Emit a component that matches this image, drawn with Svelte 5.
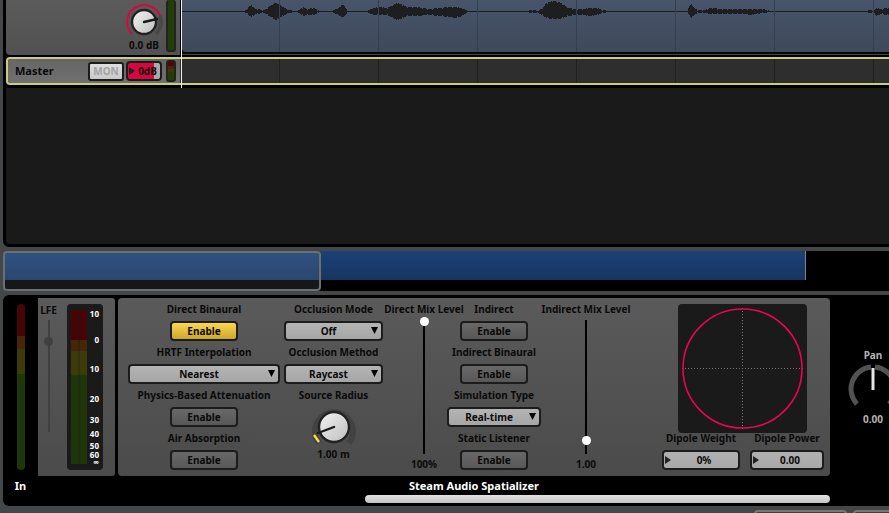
<script>
  const scale = [
    ['10', 10], ['0', 36], ['10', 65], ['20', 95], ['30', 116],
    ['40', 130], ['50', 142], ['60', 151], ['∞', 158]
  ];
  const gridLines = Array.from({ length: 14 }, (_, i) => 97 + i * 99);

  // Envelope of the clip: [x, height above the axis, height below the axis]
  const envelope = [
    [0, 0, 0], [61, 0, 0], [64, 1, 1], [66, 4, 3], [69, 6, 5], [73, 2, 2], [82, 1, 1],
    [85, 3, 3], [90, 7, 6], [93, 8, 8], [97, 7, 6], [102, 3, 3], [106, 1, 1], [114, 0, 0],
    [117, 1, 1], [121, 4, 4], [124, 2, 3], [131, 3, 3], [137, 0, 0], [150, 0, 0],
    [154, 2, 2], [158, 4, 4], [160, 7, 6], [164, 2, 2], [166, 0, 0], [184, 0, 0],
    [191, 3, 3], [197, 4, 3], [205, 3, 3], [210, 6, 6], [215, 8, 8], [218, 7, 7],
    [225, 4, 4], [235, 4, 4], [246, 2, 3], [257, 3, 4], [267, 4, 5], [273, 4, 6],
    [280, 3, 4], [285, 0, 0], [344, 0, 0], [350, 1, 1], [356, 0, 1], [361, 4, 4],
    [364, 8, 6], [370, 10, 7], [376, 9, 7], [380, 7, 6], [386, 3, 4], [393, 2, 3],
    [400, 2, 3], [407, 3, 4], [415, 3, 3], [420, 1, 1], [426, 0, 0], [505, 0, 0],
    [507, 5, 3], [509, 7, 6], [512, 3, 3], [515, 1, 1], [522, 1, 1], [528, 3, 2],
    [540, 2, 2], [562, 2, 2], [568, 2, 3], [580, 2, 1], [589, 0, 0], [684, 0, 0],
    [687, 1, 1], [691, 0, 0], [694, 3, 4], [698, 2, 2], [706, 3, 3], [720, 6, 5],
    [750, 2, 2], [760, 0, 0], [1400, 0, 0]
  ];

  function wavePath() {
    const top = [];
    const bottom = [];
    for (let i = 0; i < envelope.length - 1; i++) {
      const [x0, u0, d0] = envelope[i];
      const [x1, u1, d1] = envelope[i + 1];
      for (let x = x0; x < x1; x++) {
        const t = (x - x0) / (x1 - x0);
        const u = u0 + (u1 - u0) * t;
        const d = d0 + (d1 - d0) * t;
        const dip = (x * 7) % 5 === 0 ? 1 : 0;
        const a = 11 - Math.max(0, Math.round(u) - dip);
        const b = 12 + Math.max(0, Math.round(d) - dip);
        top.push(`L${x} ${a}H${x + 1}`);
        bottom.unshift(`L${x + 1} ${b}H${x}`);
      }
    }
    return 'M0 11' + top.join('') + bottom.join('') + 'Z';
  }
  const wave = wavePath();

  let directMix = $state(100);
  let indirectMix = $state(9);
  let lfe = $state(82);
</script>

{#snippet caret()}
  <svg class="caret" width="7" height="7" viewBox="0 0 7 7" aria-hidden="true"><path d="M0 0h7L3.5 7z" /></svg>
{/snippet}

{#snippet toggle(id, label, on)}
  <div class="field">
    <span class="label" id={id}>{label}</span>
    <button class="toggle" class:on aria-pressed={on} aria-labelledby={id}>Enable</button>
  </div>
{/snippet}

{#snippet choice(id, label, value, size)}
  <div class="field">
    <label class="label" for={id}>{label}</label>
    <div class="select {size}">
      <select {id}><option>{value}</option></select>
      {@render caret()}
    </div>
  </div>
{/snippet}

{#snippet number(id, label, value, size)}
  <div class="field">
    <label class="label" for={id}>{label}</label>
    <div class="number {size}">
      <svg width="6" height="8" viewBox="0 0 6 8" aria-hidden="true"><path d="M0 0l6 4-6 4z" /></svg>
      <input {id} type="text" {value} />
    </div>
  </div>
{/snippet}

<div class="app">
  <section class="tracks">
    <div class="track">
      <div class="head">
        <div class="volume">
          <svg width="40" height="38" viewBox="0 0 40 38" role="img" aria-label="Volume">
            <defs>
              <linearGradient id="cap" x1="0" y1="0" x2="1" y2="1">
                <stop offset="0" stop-color="#f4f4f4" /><stop offset="1" stop-color="#bdbdbd" />
              </linearGradient>
            </defs>
            <path d="M36 16A17 17 0 0 1 32 34" fill="none" stroke="#484848" stroke-width="4" />
            <path d="M8 34A17 17 0 1 1 36 16" fill="none" stroke="#d60743" stroke-width="2" />
            <circle cx="20" cy="22" r="12" fill="url(#cap)" stroke="#222" stroke-width="2.400" />
            <path d="M20 22l13-3" stroke="#1a1a1a" stroke-width="2.400" stroke-linecap="round" />
          </svg>
          <span>0.0 dB</span>
        </div>
        <div class="slot tall"></div>
      </div>
      <div class="lane">
        <svg class="clip" height="52" aria-hidden="true">
          <path d={wave} fill="#1d1e20" shape-rendering="crispEdges" />
          {#each gridLines as x}<rect {x} y="0" width="1" height="52" fill="#344052" />{/each}
        </svg>
      </div>
    </div>
    <div class="master">
      <div class="masterhead">
        <span class="name">Master</span>
        <button class="mon">MON</button>
        <div class="gain">
          <svg width="6" height="8" viewBox="0 0 6 8" aria-hidden="true"><path d="M0 0l6 4-6 4z" /></svg>
          <input type="text" value="0dB" aria-label="Master volume" />
        </div>
        <div class="slot short"></div>
      </div>
      <svg class="bus" height="24" aria-hidden="true">
        {#each gridLines as x}<rect {x} y="0" width="1" height="24" fill="#202020" />{/each}
      </svg>
    </div>
    <div class="empty"></div>
    <div class="playhead"></div>
  </section>

  <section class="overview">
    <div class="span"></div>
    <div class="viewport"></div>
  </section>

  <section class="deck">
    <div class="chain">
      <div class="unit in">
        <div class="inmeter"></div>
        <span class="title">In</span>
      </div>
      <div class="unit lfe">
        <div class="panel">
          <div class="lfecol">
            <label for="lfe">LFE</label>
            <input class="fader dim" id="lfe" type="range" min="0" max="100" bind:value={lfe} />
          </div>
          <svg class="meter" width="36" height="166" viewBox="0 0 36 166" role="img" aria-label="Level">
            <rect width="36" height="166" rx="4" fill="#1a1a1a" />
            <rect x="4" y="6" width="16" height="30" fill="#450507" />
            <rect x="4" y="36" width="16" height="11" fill="#46250a" />
            <rect x="4" y="47" width="16" height="24" fill="#3e3b0a" />
            <rect x="4" y="71" width="16" height="89" fill="#1e3609" />
            <path d="M12 6v154" stroke="#1a1a1a" stroke-opacity=".5" />
            {#each scale as [t, y]}<text x="32" y={y + 3} text-anchor="end">{t}</text>{/each}
          </svg>
        </div>
      </div>
      <div class="unit spatializer">
        <div class="panel">
          <div class="col c1">
            {@render toggle('db', 'Direct Binaural', true)}
            {@render choice('hrtf', 'HRTF Interpolation', 'Nearest', 'wide')}
            {@render toggle('pba', 'Physics-Based Attenuation', false)}
            {@render toggle('air', 'Air Absorption', false)}
          </div>
          <div class="col c2">
            {@render choice('om', 'Occlusion Mode', 'Off', 'mid')}
            {@render choice('oc', 'Occlusion Method', 'Raycast', 'mid')}
            <span class="label">Source Radius</span>
            <svg width="48" height="40" viewBox="0 0 48 40" role="img" aria-label="Source Radius">
              <path d="M9 36A19 19 0 1 1 39 36" fill="none" stroke="#424242" stroke-width="6" />
              <path d="M4 28l5 7" stroke="#fadb4a" stroke-width="2.400" />
              <circle cx="24" cy="20" r="15" fill="url(#cap)" stroke="#222" stroke-width="2.400" />
              <path d="M24 20l-16 6" stroke="#1a1a1a" stroke-width="2.400" stroke-linecap="round" />
            </svg>
            <span class="value">1.00 m</span>
          </div>
          <div class="col c3">
            <label class="label" for="dmix">Direct Mix Level</label>
            <input class="fader" id="dmix" type="range" min="0" max="100" bind:value={directMix} />
            <span class="value">100%</span>
          </div>
          <div class="col c4">
            {@render toggle('ind', 'Indirect', false)}
            {@render toggle('ib', 'Indirect Binaural', false)}
            {@render choice('sim', 'Simulation Type', 'Real-time', 'small')}
            {@render toggle('sl', 'Static Listener', false)}
          </div>
          <div class="col c5">
            <label class="label" for="imix">Indirect Mix Level</label>
            <input class="fader" id="imix" type="range" min="0" max="100" bind:value={indirectMix} />
            <span class="value">1.00</span>
          </div>
          <div class="col c6">
            <svg class="dipole" width="129" height="129" viewBox="0 0 129 129" role="img" aria-label="Dipole pattern">
              <rect width="129" height="129" rx="4" fill="#1a1a1a" />
              <path d="M64.5 4v122M4 64.5h122" stroke="#777" stroke-dasharray="1 2" />
              <circle cx="64.500" cy="64.500" r="59.500" fill="none" stroke="#ea0550" stroke-width="1.600" />
            </svg>
            <div class="pair">
              {@render number('dw', 'Dipole Weight', '0%', 'large')}
              {@render number('dp', 'Dipole Power', '0.00', '')}
            </div>
          </div>
        </div>
        <span class="title">Steam Audio Spatializer</span>
      </div>
      <div class="unit pan">
        <span class="panlabel">Pan</span>
        <svg width="54" height="48" viewBox="0 0 54 48" role="img" aria-label="Pan">
          <path d="M11 42A22 22 0 0 1 25 5M29 5A22 22 0 0 1 43 42" fill="none" stroke="#525252" stroke-width="5" />
          <path d="M27 6v22" stroke="#e6e6e6" stroke-width="3" />
        </svg>
        <span class="panvalue">0.00</span>
      </div>
    </div>
    <div class="scrollbar"></div>
  </section>

  <footer>
    <div class="tab"></div>
    <div class="tab"></div>
  </footer>
</div>

<style>
  :global(body) { background: #444747; }
  * { box-sizing: border-box; }
  .app {
    height: 100vh;
    overflow: hidden;
    display: flex;
    flex-direction: column;
    background: #444747;
    color: #0a0a0a;
    font: 700 10px/14px "Noto Sans", "Open Sans", sans-serif;
  }
  button, select, input { font: inherit; color: inherit; margin: 0; padding: 0; }
  svg { display: block; flex: none; }

  .tracks {
    position: relative;
    flex: none;
    margin-left: 3px;
    padding: 0 0 3px 3px;
    background: #000;
    border-bottom-left-radius: 6px;
  }
  .track { display: flex; height: 57px; }
  .head {
    flex: none;
    display: flex;
    justify-content: flex-end;
    gap: 2px;
    width: 174px;
    height: 55px;
    padding-right: 4px;
    background: linear-gradient(#5b5b5b, #515151);
    border-bottom-left-radius: 4px;
  }
  .volume { display: flex; flex-direction: column; align-items: center; }
  .slot {
    flex: none;
    width: 10px;
    border: 2px solid #222;
    border-radius: 3px;
  }
  .slot.tall { height: 52px; border-top: 0; background: #223d06; }
  .slot.short { height: 22px; background: linear-gradient(#4d0505 20%, #48280a 20% 36%, #403d0a 48%, #223d06 56%); }
  .lane {
    flex: 1;
    height: 55px;
    margin-left: 2px;
    border-bottom: 1px solid #444;
    background: #080808;
    overflow: hidden;
  }
  .clip { width: 100%; border-bottom-left-radius: 4px; background: linear-gradient(#47546a, #3f495a); }
  .master {
    display: flex;
    height: 28px;
    border: 2px solid #cdcb7e;
    border-right: 0;
    border-radius: 4px 0 0 4px;
    background: #2e2e2e;
    overflow: hidden;
  }
  .masterhead {
    flex: none;
    display: flex;
    align-items: center;
    gap: 2px;
    width: 172px;
    margin-right: 2px;
    padding: 0 4px 0 7px;
    background: linear-gradient(#666, #707070);
  }
  .name { flex: 1; font-size: 11px; }
  .mon {
    width: 36px;
    height: 19px;
    border: 2px solid #1c1c1c;
    border-radius: 3px;
    background: linear-gradient(#dedede, #c9c9c9);
    color: #a3a3a3;
    line-height: 14px;
  }
  .gain {
    display: flex;
    align-items: center;
    width: 36px;
    height: 20px;
    margin-right: 2px;
    padding-left: 1px;
    border: 2px solid #1c1c1c;
    border-radius: 4px;
    background: linear-gradient(90deg, #d60743 26px, #aaa 26px);
    fill: #222;
  }
  .gain input, .number input {
    flex: 1;
    min-width: 0;
    border: 0;
    background: none;
    text-align: center;
    outline: 0;
  }
  .bus { flex: 1; min-width: 0; }
  .empty { height: 159px; border-top: 3px solid #000; border-bottom-left-radius: 4px; background: #1a1a1a; }
  .playhead { position: absolute; left: 178px; top: 0; width: 1px; height: 88px; background: #f0f0f0; }

  .overview {
    position: relative;
    flex: none;
    height: 40px;
    margin: 4px 0 4px 4px;
    background: #000;
    border-radius: 4px 0 0 4px;
  }
  .span { width: 802px; max-width: 100%; height: 29px; border-right: 1px solid #77858f; background: linear-gradient(#1c4178, #163560); }
  .viewport {
    position: absolute;
    left: -1px;
    top: 0;
    width: 318px;
    height: 40px;
    border: 2px solid #6a6f72;
    border-radius: 4px;
    background: rgba(255, 255, 255, 0.09);
  }

  .deck {
    flex: none;
    margin-left: 3px;
    padding: 3px 0;
    background: #000;
    border-radius: 6px 0 0 6px;
    overflow: hidden;
  }
  .chain { display: flex; }
  .unit { flex: none; display: flex; flex-direction: column; align-items: center; height: 197px; }
  .panel { flex: none; display: flex; width: 100%; height: 178px; background: linear-gradient(#5a5a5a, #4b4b4b); }
  .title { flex: none; color: #fff; font-size: 11px; line-height: 20px; }
  .in { width: 35px; }
  .inmeter {
    flex: none;
    width: 8px;
    height: 166px;
    margin: 6px 0;
    border-radius: 4px;
    background: linear-gradient(#450507 32px, #46250a 32px 45px, #3e3b0a 45px 70px, #1e3609 70px);
  }
  .lfe { width: 77px; margin-right: 3px; }
  .lfe .panel { gap: 8px; border-radius: 0 3px 3px 0; }
  .lfecol { display: flex; flex-direction: column; align-items: center; width: 21px; padding-top: 5px; white-space: nowrap; }
  .meter { margin-top: 6px; font: 700 8px "Open Sans", sans-serif; fill: #fff; }

  .spatializer { width: 712px; }
  .spatializer .panel { padding: 0 6px 0 10px; border-radius: 4px; }
  .col { flex: none; display: flex; flex-direction: column; align-items: center; }
  .c1 { width: 152px; margin-right: 4px; }
  .c2 { width: 99px; }
  .c3 { width: 82px; }
  .c4 { width: 58px; }
  .c5 { width: 126px; }
  .c6 { flex: 1; padding: 6px 0 0 13px; }
  .field { display: flex; flex-direction: column; align-items: center; }
  .label { line-height: 23px; white-space: nowrap; }
  .value { line-height: 14px; white-space: nowrap; }
  .toggle {
    width: 68px;
    height: 20px;
    border: 2px solid #1c1c1c;
    border-radius: 4px;
    background: linear-gradient(#686868, #585858);
    line-height: 16px;
  }
  .toggle.on { background: linear-gradient(#fbd650, #cda62c); }
  .select { position: relative; height: 20px; }
  .wide { width: 152px; }
  .mid { width: 99px; }
  .small { width: 94px; }
  select {
    appearance: none;
    display: block;
    width: 100%;
    height: 100%;
    padding-right: 10px;
    border: 2px solid #1c1c1c;
    border-radius: 4px;
    background: linear-gradient(#b4b4b4, #a6a6a6);
    text-align: center;
    text-align-last: center;
  }
  .caret { position: absolute; right: 5px; top: 6px; pointer-events: none; }
  .fader {
    appearance: none;
    writing-mode: vertical-lr;
    direction: rtl;
    width: 10px;
    height: 140px;
    background: linear-gradient(#000, #000) center bottom 3px / 2px 134px no-repeat;
  }
  .fader::-webkit-slider-thumb { appearance: none; width: 9px; height: 9px; border-radius: 50%; background: #fff; }
  .fader.dim { height: 118px; background: linear-gradient(#404040, #404040) center / 2px 112px no-repeat; }
  .fader.dim::-webkit-slider-thumb { background: #404040; }
  .c3 .fader, .c5 .fader { margin-top: -4px; }
  .dipole { align-self: center; margin-right: 2px; }
  .pair { display: flex; gap: 10px; margin-top: -6px; }
  .number {
    display: flex;
    align-items: center;
    width: 74px;
    height: 20px;
    padding: 0 1px;
    border: 2px solid #1c1c1c;
    border-radius: 4px;
    background: linear-gradient(#b0b0b0, #a9a9a9);
    fill: #222;
  }
  .number.large { width: 78px; }

  .pan { width: 86px; padding-top: 50px; color: #b4b4b4; }
  .pan svg { height: 48px; }
  .panvalue { margin-top: 2px; }
  .scrollbar {
    width: 465px;
    height: 8px;
    margin-left: 362px;
    border-radius: 4px;
    background: linear-gradient(#e2e2e2, #c4c4c4);
  }
  footer { display: flex; justify-content: flex-end; gap: 6px; margin-top: 4px; overflow: hidden; }
  .tab { flex: none; width: 93px; height: 24px; border: 2px solid #777; border-radius: 4px; background: #3e4040; }
  .tab:last-child { margin-right: -57px; }
</style>
